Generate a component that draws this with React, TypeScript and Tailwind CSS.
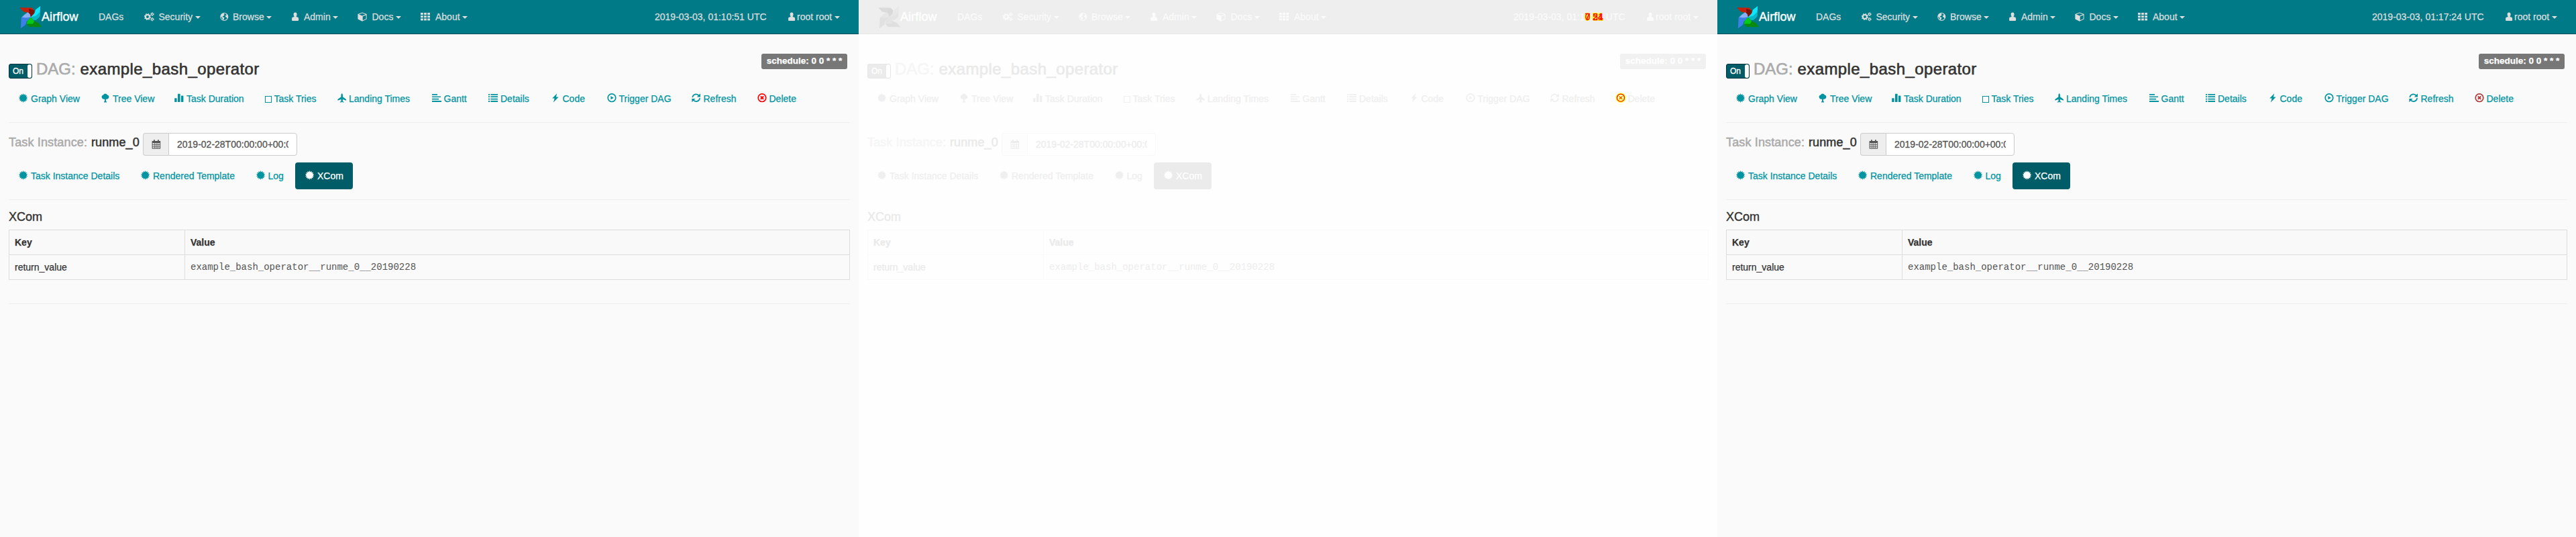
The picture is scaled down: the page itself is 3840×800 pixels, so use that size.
import type { ReactNode } from "react";

type Theme = {
  page: string;
  nav: string;
  brand: string;
  navText: string;
  toggle: string;
  muted: string;
  title: string;
  link: string;
  active: string;
  badge: string;
  hr: string;
  border: string;
  addon: string;
  input: string;
  body: string;
  code: string;
  head: string;
  logo: string;
};

const live: Theme = {
  page: "bg-[#fafafa]",
  nav: "bg-[#007a87] border-[#004c54]",
  brand: "text-white",
  navText: "text-[#dedede]",
  toggle: "bg-[#005c66] border-[#00373d] text-white",
  muted: "text-[#aaaaaa]",
  title: "text-[#333333]",
  link: "text-[#0093a0]",
  active: "bg-[#005c66] text-white",
  badge: "bg-[#777777] text-white",
  hr: "border-[#eeeeee]",
  border: "border-[#dddddd]",
  addon: "bg-[#eeeeee] border-[#cccccc] text-[#555555]",
  input: "bg-white border-[#cccccc] text-[#555555]",
  body: "text-[#333333]",
  code: "text-[#555555]",
  head: "bg-[#f9f9f9]",
  logo: "",
};

const faded: Theme = {
  page: "bg-[#fefefe]",
  nav: "bg-[#eeeeee] border-[#e7e7e7]",
  brand: "text-white",
  navText: "text-[#fbfbfb]",
  toggle: "bg-[#ebebeb] border-[#e6e6e6] text-white",
  muted: "text-[#f6f6f6]",
  title: "text-[#eaeaea]",
  link: "text-[#efefef]",
  active: "bg-[#ebebeb] text-white",
  badge: "bg-[#f1f1f1] text-white",
  hr: "border-[#fdfdfd]",
  border: "border-[#fafafa]",
  addon: "bg-[#fdfdfd] border-[#f9f9f9] text-[#ededed]",
  input: "bg-white border-[#f9f9f9] text-[#ededed]",
  body: "text-[#eaeaea]",
  code: "text-[#ededed]",
  head: "bg-[#fefefe]",
  logo: "opacity-10 grayscale",
};

function Icon({ children }: { children: ReactNode }) {
  return (
    <svg viewBox="0 0 14 14" fill="currentColor" className="mt-[2px] h-[14px] w-[14px] shrink-0 overflow-visible">
      {children}
    </svg>
  );
}

const burst = Array.from({ length: 28 }, (_, i) => {
  const r = i % 2 ? 4.7 : 6.9;
  const a = (i * Math.PI) / 14;
  return `${(6.6 + r * Math.sin(a)).toFixed(2)},${(7 - r * Math.cos(a)).toFixed(2)}`;
}).join(" ");

const icons = {
  burst: <polygon points={burst} />,
  tree: <path d="M7 0.4C8.3 0.4 9.3 1.2 9.7 2.2C11.2 2.5 12.4 3.7 12.4 5.2C12.4 7.2 10.9 8.8 8.9 8.8C8.5 8.8 8.2 8.8 7.9 8.7V11.2L9 12.8V13.4H5V12.8L6.1 11.2V8.7C5.8 8.8 5.5 8.8 5.1 8.8C3.1 8.8 1.6 7.2 1.6 5.2C1.6 3.7 2.8 2.5 4.3 2.2C4.7 1.2 5.7 0.4 7 0.4Z" />,
  stats: (
    <>
      <rect x="0.2" y="7.2" width="3.4" height="5.8" rx="0.4" />
      <rect x="5" y="0.8" width="3.6" height="12.2" rx="0.4" />
      <rect x="10" y="3.6" width="3.4" height="9.4" rx="0.4" />
    </>
  ),
  square: <rect x="0.5" y="4.5" width="9" height="9" fill="none" stroke="currentColor" />,
  plane: <path d="M6.7 0.2C7.6 0.2 8 1.7 8 3.2V5.3L13 9V10.8L8 8.9L7.8 11.4L9.6 13V13.7L7.1 13.1L6.7 13.7L6.3 13.1L3.8 13.7V13L5.6 11.4L5.4 8.9L0.4 10.8V9L5.4 5.3V3.2C5.4 1.7 5.8 0.2 6.7 0.2Z" />,
  gantt: <path d="M0 1H8V2.8H0ZM0 4.4H13V6.1H0ZM0 7.7H10V9.4H0ZM0 11H14V13H0Z" />,
  list: <path d="M0 1H2V2.8H0ZM3.4 1H14V2.8H3.4ZM0 4.3H2V6.1H0ZM3.4 4.3H14V6.1H3.4ZM0 7.7H2V9.5H0ZM3.4 7.7H14V9.5H3.4ZM0 11.1H2V13H0ZM3.4 11.1H14V13H3.4Z" />,
  flash: <path d="M9.2 0.2L2.2 7.6H5.6L4 13.4L11.6 5.6H8Z" />,
  play: (
    <>
      <circle cx="7" cy="6.7" r="5.8" fill="none" stroke="currentColor" strokeWidth="1.7" />
      <path d="M5.4 4.1L9.8 6.7L5.4 9.3Z" />
    </>
  ),
  refresh: (
    <>
      <path d="M1.3 6.2A5.3 5.3 0 0 1 10.9 3.7M12.1 7.2A5.3 5.3 0 0 1 2.5 9.8" fill="none" stroke="currentColor" strokeWidth="1.7" />
      <path d="M13 0.3V5.6H7.9ZM0.4 13.2V7.9H5.5Z" />
    </>
  ),
  remove: (
    <>
      <circle cx="7" cy="6.7" r="5.8" fill="none" stroke="currentColor" strokeWidth="1.7" />
      <path d="M4.8 4.5L9.2 8.9M9.2 4.5L4.8 8.9" fill="none" stroke="currentColor" strokeWidth="1.9" />
    </>
  ),
  removeMarked: (
    <>
      <circle cx="7" cy="6.7" r="5.7" fill="#ffffff" stroke="#ffff00" strokeWidth="3.2" />
      <circle cx="7" cy="6.7" r="5.6" fill="none" stroke="#ff0000" strokeWidth="1.1" />
      <path d="M4.6 4.6L9.4 8.8M9.4 4.6L4.6 8.8" stroke="#ffff00" strokeWidth="2.4" />
      <path d="M4.6 4.6L9.4 8.8M9.4 4.6L4.6 8.8" stroke="#ff0000" strokeWidth="1" />
    </>
  ),
  calendar: (
    <>
      <path d="M0.6 2H13.2V13.6H0.6Z" />
      <path d="M3 0.2H4.8V3.4H3ZM9 0.2H10.8V3.4H9Z" />
      <path d="M1.6 5H4V7H1.6ZM4.7 5H6.6V7H4.7ZM7.3 5H9.2V7H7.3ZM9.9 5H12.2V7H9.9ZM1.6 7.8H4V9.8H1.6ZM4.7 7.8H6.6V9.8H4.7ZM7.3 7.8H9.2V9.8H7.3ZM9.9 7.8H12.2V9.8H9.9ZM1.6 10.6H4V12.6H1.6ZM4.7 10.6H6.6V12.6H4.7ZM7.3 10.6H9.2V12.6H7.3ZM9.9 10.6H12.2V12.6H9.9Z" fill="#ffffff" fillOpacity="0.8" />
    </>
  ),
  cogs: (
    <>
      <circle cx="4.9" cy="8" r="3" fill="none" stroke="currentColor" strokeWidth="2" />
      <circle cx="4.9" cy="8" r="4.4" fill="none" stroke="currentColor" strokeWidth="1.4" strokeDasharray="1.75 1.7" />
      <circle cx="11.9" cy="4.1" r="1.5" fill="none" stroke="currentColor" strokeWidth="1.2" />
      <circle cx="11.9" cy="4.1" r="2.3" fill="none" stroke="currentColor" strokeWidth="0.9" strokeDasharray="1.2 1.2" />
      <circle cx="11.9" cy="11.7" r="1.5" fill="none" stroke="currentColor" strokeWidth="1.2" />
      <circle cx="11.9" cy="11.7" r="2.3" fill="none" stroke="currentColor" strokeWidth="0.9" strokeDasharray="1.2 1.2" />
    </>
  ),
  globe: (
    <>
      <circle cx="6.3" cy="8" r="5.5" fill="none" stroke="currentColor" strokeWidth="1.1" />
      <path d="M1.2 5.6C2.2 3.6 4 2.4 6.2 2.4L5.6 4.2L7 5L5.2 6.8L3.6 7.2L4.6 8.6L6.4 9L6 10.8L5 13L3.6 11.4L3.4 9.6L1.2 7.8ZM8.4 3.2C10.6 4.2 12 6 11.8 8.6L10.4 10.6L9.4 8.6L7.8 8L8.4 6L10 5.4Z" />
    </>
  ),
  user: <path d="M5.1 1.6C6.7 1.6 7.6 2.8 7.6 4.5C7.6 5.6 7.2 6.7 6.7 7.3V8L9 8.8C9.7 9.1 10.1 9.6 10.1 10.4V13.2C10.1 13.6 9.8 13.9 9.4 13.9H0.8C0.4 13.9 0.1 13.6 0.1 13.2V10.4C0.1 9.6 0.5 9.1 1.2 8.8L3.5 8V7.3C3 6.7 2.6 5.6 2.6 4.5C2.6 2.8 3.5 1.6 5.1 1.6Z" />,
  cube: (
    <path fillRule="evenodd" d="M7 1.4L13.6 3.9V11.6L7 14.7L0.4 11.6V3.9ZM7 2.5L2 4.4L7 6.4L12 4.4ZM7.7 7.4V13.2L12.6 10.9V5.5Z" />
  ),
  grid: <path d="M0 2H3.8V5H0ZM5.1 2H8.9V5H5.1ZM10.2 2H14V5H10.2ZM0 6.2H3.8V9.2H0ZM5.1 6.2H8.9V9.2H5.1ZM10.2 6.2H14V9.2H10.2ZM0 10.4H3.8V13.4H0ZM5.1 10.4H8.9V13.4H5.1ZM10.2 10.4H14V13.4H10.2Z" />,
};

type IconName = keyof typeof icons;

function Logo({ className }: { className: string }) {
  return (
    <svg viewBox="0 0 33 33" className={`h-[33px] w-[33px] shrink-0 overflow-visible ${className}`}>
      <path d="M0.3 2.2L18.5 2.6L22.4 6.6L21.6 11.6L16.8 16.6L13 10L6 8.6Z" fill="#c4210b" />
      <path d="M14 4L22.4 6.6L21.6 11.6L16.8 16.6L14.4 10.6Z" fill="#7e1307" />
      <path d="M31.2 0L30.2 15.6L25 20.6L19.8 20.4L16.8 16.6L22.6 10.4L24 5.4Z" fill="#12e5fb" />
      <path d="M30.2 9L30.2 15.6L25 20.6L19.8 20.4L16.8 16.6L24.6 14.6Z" fill="#07b6c9" />
      <path d="M33 31.2L14.4 31L10.6 26.4L12 21.4L16.8 16.6L22 22.6L28 25Z" fill="#0a8a0d" />
      <path d="M16.8 16.6L22 22.6L20 26.6L10.6 26.4L12 21.4Z" fill="#05c91a" />
      <path d="M1.8 33.3L2.6 17.6L8 12.4L13 9.8L16.8 16.6L11 22.6L9 28Z" fill="#3d7fe6" />
      <path d="M3.4 16.4L8 12.4L12.4 9.2L15.6 12L16.8 16.6L9.4 17.4Z" fill="#86b0f3" />
    </svg>
  );
}

function Caret() {
  return <span className="mt-[9px] h-0 w-0 shrink-0 border-x-[4px] border-t-[4px] border-x-transparent border-t-current" />;
}

function NavItem({ icon, label, width, iconWidth, textWidth }: { icon: IconName; label: string; width: string; iconWidth: string; textWidth: string }) {
  return (
    <li className={`flex shrink-0 ${width}`}>
      <span className={`shrink-0 ${iconWidth}`}>
        <Icon>{icons[icon]}</Icon>
      </span>
      <span className={`shrink-0 ${textWidth}`}>{label}</span>
      <Caret />
    </li>
  );
}

function Tab({ icon, label, width, iconWidth = "w-[18px]", iconClass = "" }: { icon: IconName; label: string; width: string; iconWidth?: string; iconClass?: string }) {
  return (
    <li className={`flex h-10 shrink-0 pt-[10px] pl-[15px] ${width}`}>
      <span className={`shrink-0 ${iconWidth} ${iconClass}`}>
        <Icon>{icons[icon]}</Icon>
      </span>
      <span>{label}</span>
    </li>
  );
}

/* Two differing values drawn over each other, outlined in yellow. */
function Changed({ a, b, width }: { a: string; b: string; width: string }) {
  return (
    <span className={`relative inline-block text-[#ff0000] [-webkit-text-stroke:2px_#ffff00] [paint-order:stroke_fill] ${width}`}>
      {a}
      <span className="absolute top-0 left-0 [-webkit-text-stroke:0.4px_#ff0000]">{b}</span>
    </span>
  );
}

function Screen({ t, time, deleteIcon, deleteClass }: { t: Theme; time: ReactNode; deleteIcon: IconName; deleteClass: string }) {
  return (
    <section className={`flex h-[800px] w-[1280px] shrink-0 flex-col overflow-hidden ${t.page}`}>
      <header className={`flex h-[51px] shrink-0 items-start border-b ${t.nav}`}>
        <div className="flex w-[147px] shrink-0 pt-[9px] pl-[29px]">
          <Logo className={t.logo} />
          <span className={`mt-[6px] text-[18px] leading-5 tracking-[0.1px] [-webkit-text-stroke:0.4px] ${t.brand}`}>Airflow</span>
        </div>
        <ul className={`flex flex-1 pt-[15px] ${t.navText}`}>
          <li className="w-[67.5px] shrink-0">DAGs</li>
          <NavItem icon="cogs" label="Security" width="w-[113.5px]" iconWidth="w-[22px]" textWidth="w-[54px]" />
          <NavItem icon="globe" label="Browse" width="w-[107px]" iconWidth="w-[19px]" textWidth="w-[50px]" />
          <NavItem icon="user" label="Admin" width="w-[98px]" iconWidth="w-[18px]" textWidth="w-[42.5px]" />
          <NavItem icon="cube" label="Docs" width="w-[94px]" iconWidth="w-[21.5px]" textWidth="w-[35px]" />
          <NavItem icon="grid" label="About" width="w-[80px]" iconWidth="w-[22px]" textWidth="w-[40px]" />
        </ul>
        <div className={`flex w-[304px] shrink-0 pt-[15px] ${t.navText}`}>
          <span className="w-[198.5px] shrink-0 whitespace-nowrap">{time}</span>
          <span className="w-[13.5px] shrink-0">
            <Icon>{icons.user}</Icon>
          </span>
          <span className="w-[55.5px] shrink-0">root root</span>
          <Caret />
        </div>
      </header>

      <main className="flex flex-col px-[13px]">
        <div className="flex h-[76px] items-start">
          <div className={`mt-[44px] flex h-[22px] w-[35px] shrink-0 justify-between rounded-[3px] border text-[12px] leading-5 ${t.toggle}`}>
            <span className="pl-[5px] [-webkit-text-stroke:0.3px]">On</span>
            <span className="w-[6px] rounded-[3px] bg-white" />
          </div>
          <h3 className="mt-[39px] ml-[6px] flex text-[24px] leading-[26px]">
            <span className={`w-[65.5px] [-webkit-text-stroke:0.6px] ${t.muted}`}>DAG:</span>
            <span className={`tracking-[0.4px] [-webkit-text-stroke:0.6px] ${t.title}`}>example_bash_operator</span>
          </h3>
          <span className={`mt-[29px] mr-[4px] ml-auto h-[23px] w-[128px] rounded-[3px] text-center text-[13.5px] leading-[22px] font-bold ${t.badge}`}>schedule: 0 0 * * *</span>
        </div>

        <ul className={`flex h-[55px] ${t.link}`}>
          <Tab icon="burst" label="Graph View" width="w-[122px]" />
          <Tab icon="tree" label="Tree View" width="w-[110px]" />
          <Tab icon="stats" label="Task Duration" width="w-[135px]" />
          <Tab icon="square" label="Task Tries" width="w-[108px]" iconWidth="w-[13.5px]" />
          <Tab icon="plane" label="Landing Times" width="w-[140.5px]" iconWidth="w-[17px]" />
          <Tab icon="gantt" label="Gantt" width="w-[84.5px]" />
          <Tab icon="list" label="Details" width="w-[92.5px]" />
          <Tab icon="flash" label="Code" width="w-[84px]" />
          <Tab icon="play" label="Trigger DAG" width="w-[126px]" />
          <Tab icon="refresh" label="Refresh" width="w-[98px]" />
          <Tab icon={deleteIcon} label="Delete" width="w-[90px]" iconClass={deleteClass} />
        </ul>
        <hr className={`border-t ${t.hr}`} />

        <div className="flex h-[59px] items-start pt-[15px]">
          <h4 className="mt-[4px] flex w-[200px] shrink-0 text-[18px] leading-5 whitespace-nowrap">
            <span className={`w-[123px] tracking-[0.15px] [-webkit-text-stroke:0.5px] ${t.muted}`}>Task Instance:</span>
            <span className={`tracking-[0.1px] [-webkit-text-stroke:0.5px] ${t.title}`}>runme_0</span>
          </h4>
          <span className={`flex h-[34px] w-[38px] shrink-0 justify-center rounded-l-[4px] border border-r-0 pt-[7px] ${t.addon}`}>
            <Icon>{icons.calendar}</Icon>
          </span>
          <span className={`h-[34px] w-[192px] shrink-0 rounded-r-[4px] border px-3 pt-[6px] [-webkit-text-stroke:0.3px] ${t.input}`}>
            <span className="block overflow-hidden whitespace-nowrap">2019-02-28T00:00:00+00:00</span>
          </span>
        </div>

        <ul className={`flex h-[55px] ${t.link}`}>
          <Tab icon="burst" label="Task Instance Details" width="w-[182px]" />
          <Tab icon="burst" label="Rendered Template" width="w-[171.5px]" />
          <Tab icon="burst" label="Log" width="w-[73.5px]" />
          <Tab icon="burst" label="XCom" width={`w-[86px] rounded-[4px] ${t.active}`} />
        </ul>
        <hr className={`border-t ${t.hr}`} />

        <h4 className={`mt-[15px] h-[29px] text-[18px] leading-5 [-webkit-text-stroke:0.4px] ${t.body}`}>XCom</h4>
        <table className={`w-[1254px] table-fixed border-collapse border text-left ${t.border} ${t.body}`}>
          <thead>
            <tr className={`h-[37px] ${t.head}`}>
              <th className={`w-[262px] border px-2 font-bold ${t.border}`}>Key</th>
              <th className={`border px-2 font-bold ${t.border}`}>Value</th>
            </tr>
          </thead>
          <tbody>
            <tr className="h-[37px]">
              <td className={`border px-2 ${t.border}`}>return_value</td>
              <td className={`border px-2 font-['Liberation_Mono',monospace] [-webkit-text-stroke:0px] ${t.border} ${t.code}`}>example_bash_operator__runme_0__20190228</td>
            </tr>
          </tbody>
        </table>
        <hr className={`mt-[35px] border-t ${t.hr}`} />
      </main>
    </section>
  );
}

export default function App() {
  return (
    <div className="flex h-[800px] w-[3840px] overflow-hidden font-['Liberation_Sans',Arial,sans-serif] text-[14px] leading-5 [-webkit-text-stroke:0.25px]">
      <Screen t={live} time="2019-03-03, 01:10:51 UTC" deleteIcon="remove" deleteClass="text-[#ff0000]" />
      <Screen
        t={faded}
        time={
          <>
            2019-03-03, 01:1
            <Changed a="0" b="7" width="w-[7.8px]" />:
            <Changed a="51" b="24" width="w-[15.6px]" /> UTC
          </>
        }
        deleteIcon="removeMarked"
        deleteClass=""
      />
      <Screen t={live} time="2019-03-03, 01:17:24 UTC" deleteIcon="remove" deleteClass="text-[#b03a3a]" />
    </div>
  );
}
